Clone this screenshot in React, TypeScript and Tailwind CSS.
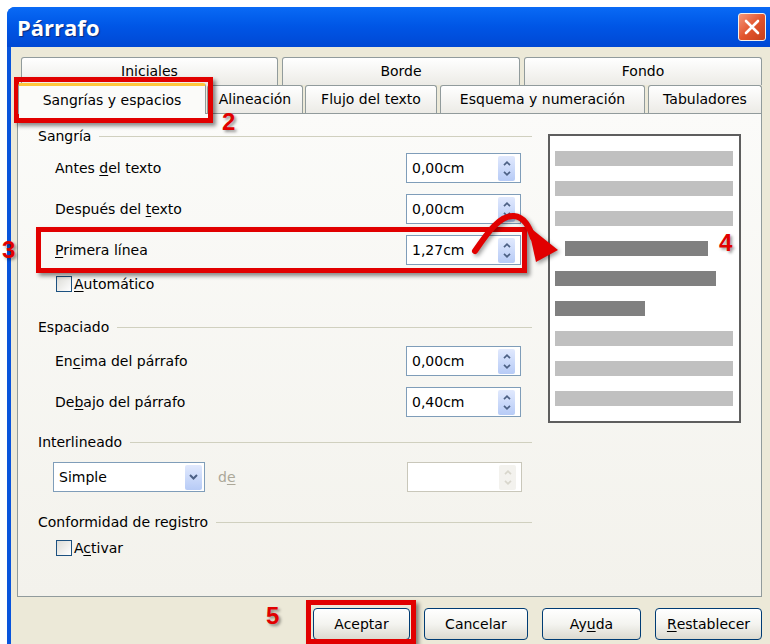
import React from 'react';

// Access-key letter, underlined like a classic Windows mnemonic
function U({ children }: { children: React.ReactNode }) {
  return <span className="underline underline-offset-2">{children}</span>;
}

function Chevron({ dir, color }: { dir: 'up' | 'down'; color: string }) {
  return (
    <svg width="8" height="5" viewBox="0 0 8 5">
      <path
        d={dir === 'up' ? 'M1 4.2 L4 1.2 L7 4.2' : 'M1 0.8 L4 3.8 L7 0.8'}
        fill="none"
        stroke={color}
        strokeWidth="1.7"
      />
    </svg>
  );
}

function SpinArrows({ disabled }: { disabled?: boolean }) {
  return (
    <div
      className={`flex h-[25px] w-[17px] flex-col items-center justify-center gap-[5px] rounded-[2px] ${
        disabled ? 'bg-[#f3f2ee]' : 'bg-gradient-to-b from-[#e1e9fd] to-[#b7cbf6]'
      }`}
    >
      <Chevron dir="up" color={disabled ? '#d8d6cc' : '#4d6185'} />
      <Chevron dir="down" color={disabled ? '#d8d6cc' : '#4d6185'} />
    </div>
  );
}

function SpinBox({ value, disabled }: { value?: string; disabled?: boolean }) {
  return (
    <div
      className={`flex h-[30px] w-[115px] items-center justify-between border bg-white pl-[5px] pr-[5px] ${
        disabled ? 'border-[#c9c7ba]' : 'border-[#7f9db9]'
      }`}
    >
      <span>{value}</span>
      <SpinArrows disabled={disabled} />
    </div>
  );
}

function GroupHeader({ title, className = '' }: { title: string; className?: string }) {
  return (
    <div className={`flex h-4 items-center gap-[8px] ${className}`}>
      <span>{title}</span>
      <div className="h-px flex-1 bg-[#d0d0bf]" />
    </div>
  );
}

function FieldRow({ label, value, className = '' }: { label: React.ReactNode; value: string; className?: string }) {
  return (
    <div className={`flex h-[30px] items-center justify-between pl-[17px] pr-[11px] ${className}`}>
      <span>{label}</span>
      <SpinBox value={value} />
    </div>
  );
}

function CheckRow({ label, className = '' }: { label: React.ReactNode; className?: string }) {
  return (
    <div className={`flex h-4 items-center gap-[2px] pl-[18px] ${className}`}>
      <div className="h-4 w-4 border border-[#1c5180] bg-gradient-to-br from-[#dcdcd7] to-white" />
      <span>{label}</span>
    </div>
  );
}

function Tab({ label, width, className = '' }: { label: string; width: string; className?: string }) {
  return (
    <div
      className={`flex h-[28px] items-center justify-center rounded-t-[3px] border border-b-0 border-[#919b9c] bg-gradient-to-b from-white to-[#ecebe6] ${width} ${className}`}
    >
      {label}
    </div>
  );
}

const previewBars = [
  { w: 'w-[178px]', ml: 'ml-0', dark: false },
  { w: 'w-[178px]', ml: 'ml-0', dark: false },
  { w: 'w-[178px]', ml: 'ml-0', dark: false },
  { w: 'w-[143px]', ml: 'ml-[10px]', dark: true },
  { w: 'w-[161px]', ml: 'ml-0', dark: true },
  { w: 'w-[90px]', ml: 'ml-0', dark: true },
  { w: 'w-[178px]', ml: 'ml-0', dark: false },
  { w: 'w-[178px]', ml: 'ml-0', dark: false },
  { w: 'w-[178px]', ml: 'ml-0', dark: false },
];

function XpButton({ children, width }: { children: React.ReactNode; width: string }) {
  return (
    <div
      className={`flex h-[32px] items-center justify-center rounded-[4px] border border-[#003c74] bg-gradient-to-b from-white via-[#f4f4f0] to-[#dcdad0] ${width}`}
    >
      {children}
    </div>
  );
}

export default function App() {
  return (
    <div className="relative h-[644px] w-[770px] overflow-hidden bg-white pl-[7px] pt-[7px] font-['DejaVu_Sans',sans-serif] text-[14px] text-black">
      <div className="flex h-full flex-col overflow-hidden rounded-tl-[8px] bg-[#0854dc]">
        {/* title bar */}
        <div className="flex h-[40px] items-center justify-between bg-gradient-to-b from-[#0a6af5] via-[#0055e5] to-[#0048d4] pl-[10px] pr-[4px]">
          <span className="font-['Open_Sans',sans-serif] text-[22px] font-bold text-white [text-shadow:1px_1px_1px_#0a2a7a]">
            Párrafo
          </span>
          <div className="flex h-[28px] w-[28px] items-center justify-center rounded-[3px] border border-[#f4f0ea] bg-gradient-to-br from-[#f3967a] via-[#e2552d] to-[#c8401c]">
            <svg width="16" height="16" viewBox="0 0 16 16">
              <path d="M2 2 L14 14 M14 2 L2 14" stroke="white" strokeWidth="2.6" strokeLinecap="round" />
            </svg>
          </div>
        </div>

        {/* dialog body */}
        <div className="ml-[4px] flex flex-1 flex-col bg-[#ece9d8] pl-[6px] pr-[8px] pt-[10px]">
          {/* back tab row */}
          <div className="flex h-[28px] pl-[4px]">
            <Tab label="Iniciales" width="w-[257px]" />
            <Tab label="Borde" width="w-[238px]" className="ml-[4px]" />
            <Tab label="Fondo" width="w-[238px]" className="ml-[4px]" />
          </div>
          {/* front tab row */}
          <div className="flex h-[28px] items-end pl-[1px]">
            <div className="relative z-10 -mb-px flex h-[31px] w-[188px] items-center justify-center rounded-t-[3px] border border-b-0 border-[#919b9c] border-t-[3px] border-t-[#ffc73c] bg-[#fbfbf9]">
              Sangrías y espacios
            </div>
            <Tab label="Alineación" width="w-[96px]" className="ml-[1px]" />
            <Tab label="Flujo del texto" width="w-[132px]" className="ml-[2px]" />
            <Tab label="Esquema y numeración" width="w-[205px]" className="ml-[3px]" />
            <Tab label="Tabuladores" width="w-[114px]" className="ml-[3px]" />
          </div>

          {/* tab page */}
          <div className="flex h-[484px] border border-[#919b9c] bg-gradient-to-b from-[#fbfbf9] to-[#f3f2ec]">
            <div className="ml-[20px] w-[494px] pt-[14px]">
              <GroupHeader title="Sangría" />
              <FieldRow className="mt-[9px]" label={<>Antes <U>d</U>el texto</>} value="0,00cm" />
              <FieldRow className="mt-[11px]" label={<>Después del <U>t</U>exto</>} value="0,00cm" />
              <FieldRow className="mt-[11px]" label={<><U>P</U>rimera línea</>} value="1,27cm" />
              <CheckRow className="mt-[11px]" label={<><U>A</U>utomático</>} />

              <GroupHeader title="Espaciado" className="mt-[27px]" />
              <FieldRow className="mt-[11px]" label={<>En<U>c</U>ima del párrafo</>} value="0,00cm" />
              <FieldRow className="mt-[11px]" label={<>De<U>b</U>ajo del párrafo</>} value="0,40cm" />

              <GroupHeader title="Interlineado" className="mt-[17px]" />
              <div className="mt-[12px] flex h-[30px] items-center pl-[15px] pr-[10px]">
                <div className="flex h-[30px] w-[152px] items-center justify-between border border-[#7f9db9] bg-white pl-[5px] pr-[2px]">
                  <span>Simple</span>
                  <div className="flex h-[25px] w-[17px] items-center justify-center rounded-[2px] bg-gradient-to-b from-[#e1e9fd] to-[#b7cbf6]">
                    <svg width="9" height="6" viewBox="0 0 9 6">
                      <path d="M1 1 L4.5 4.5 L8 1" fill="none" stroke="#4d6185" strokeWidth="2" />
                    </svg>
                  </div>
                </div>
                <span className="ml-[13px] text-[#aca899]">
                  d<U>e</U>
                </span>
                <div className="ml-auto">
                  <SpinBox disabled />
                </div>
              </div>

              <GroupHeader title="Conformidad de registro" className="mt-[22px]" />
              <CheckRow className="mt-[10px]" label={<>A<U>c</U>tivar</>} />
            </div>

            {/* paragraph preview */}
            <div className="ml-[16px] mt-[20px] flex h-[289px] w-[193px] flex-col gap-[15px] border-2 border-[#5e5e5e] bg-white pl-[5px] pt-[15px]">
              {previewBars.map((bar, i) => (
                <div
                  key={i}
                  className={`h-[15px] ${bar.w} ${bar.ml} ${bar.dark ? 'bg-[#808080]' : 'bg-[#c0c0c0]'}`}
                />
              ))}
            </div>
          </div>

          {/* dialog buttons */}
          <div className="mt-[11px] flex justify-end gap-[14px]">
            <XpButton width="w-[97px]">Aceptar</XpButton>
            <XpButton width="w-[104px]">Cancelar</XpButton>
            <XpButton width="w-[99px]">
              Ay<U>u</U>da
            </XpButton>
            <XpButton width="w-[107px]">
              <U>R</U>establecer
            </XpButton>
          </div>
        </div>
      </div>

      {/* step callouts drawn over the dialog */}
      <div className="absolute left-[14px] top-[77px] h-[46px] w-[199px] border-[5px] border-[#e10000] shadow-[3px_3px_4px_rgba(0,0,0,0.45)]" />
      <div className="absolute left-[36px] top-[227px] h-[46px] w-[491px] border-[5px] border-[#e10000] shadow-[3px_3px_4px_rgba(0,0,0,0.45)]" />
      <div className="absolute left-[306px] top-[600px] h-[44px] w-[110px] border-[5px] border-[#e10000] shadow-[3px_3px_4px_rgba(0,0,0,0.45)]" />

      <span className="absolute left-[222px] top-[110px] font-['Liberation_Sans',sans-serif] text-[24px] font-bold leading-none text-[#e10000] [text-shadow:2px_2px_3px_rgba(0,0,0,0.4)]">
        2
      </span>
      <span className="absolute left-[2px] top-[238px] font-['Liberation_Sans',sans-serif] text-[24px] font-bold leading-none text-[#e10000] [text-shadow:2px_2px_3px_rgba(0,0,0,0.4)]">
        3
      </span>
      <span className="absolute left-[719px] top-[231px] font-['Liberation_Sans',sans-serif] text-[24px] font-bold leading-none text-[#e10000] [text-shadow:2px_2px_3px_rgba(0,0,0,0.4)]">
        4
      </span>
      <span className="absolute left-[266px] top-[604px] font-['Liberation_Sans',sans-serif] text-[24px] font-bold leading-none text-[#e10000] [text-shadow:2px_2px_3px_rgba(0,0,0,0.4)]">
        5
      </span>

      <svg className="pointer-events-none absolute left-0 top-0" width="770" height="644" viewBox="0 0 770 644">
        <g style={{ filter: 'drop-shadow(2px 2px 2px rgba(0,0,0,0.4))' }}>
          <path
            d="M475 251 C488 232 500 215 514 216 C524 217 529 226 533 238"
            fill="none"
            stroke="#e10000"
            strokeWidth="6"
            strokeLinecap="round"
          />
          <polygon points="558,250 528,226 536,262" fill="#e10000" />
        </g>
      </svg>
    </div>
  );
}
